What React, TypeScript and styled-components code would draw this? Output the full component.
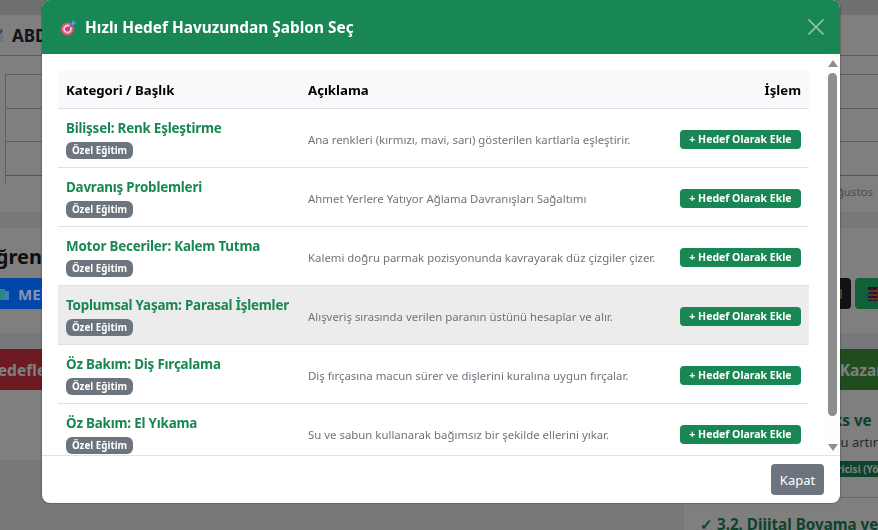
import React from 'react';
import styled, { createGlobalStyle } from 'styled-components';

const FONT = '"Noto Sans", "Open Sans", "Liberation Sans", sans-serif';

const GlobalStyle = createGlobalStyle`
  html, body {
    margin: 0;
    height: 100%;
    overflow: hidden;
    background: #eef0f3;
    font-family: ${FONT};
  }
  * { box-sizing: border-box; }
`;

const Page = styled.div`
  width: 930px;
  margin-left: -20px;
  height: 530px;
  overflow: hidden;
  display: flex;
  flex-direction: column;
  gap: 16px;
  color: #212529;
  & > * { flex: none; }
`;

const ChartCard = styled.section`
  background: #fff;
  height: 212px;
`;

const CardTop = styled.div`
  height: 15px;
  background: #dfe0e3;
`;

const Toolbar = styled.div`
  height: 40px;
  display: flex;
  align-items: center;
  gap: 8px;
  padding-left: 8px;
  font-size: 17px;
  font-weight: 700;
  color: #222838;
`;

const ChartFoot = styled.div`
  display: flex;
  justify-content: flex-end;
  padding-right: 37px;
  font-size: 11.5px;
  line-height: 18px;
  color: #999;
`;

const ActionCard = styled.section`
  background: #fff;
  height: 105px;
  padding-top: 16px;
`;

const ActionTitle = styled.h2`
  margin: 0 0 8px;
  font-size: 20px;
  line-height: 26px;
  font-weight: 700;
  color: #1c1c1c;
`;

const ActionRow = styled.div`
  display: flex;
  justify-content: space-between;
`;

const ActionGroup = styled.div`
  display: flex;
  gap: 4px;
`;

const ActionButton = styled.div<{ $bg: string; $w: number; $pad: number }>`
  width: ${(p) => p.$w}px;
  height: 31px;
  display: flex;
  align-items: center;
  gap: 8px;
  padding-left: ${(p) => p.$pad}px;
  border-radius: 4px;
  background: ${(p) => p.$bg};
  color: #fff;
  font-size: 15px;
  font-weight: 700;
  overflow: hidden;
  svg { flex: none; }
`;

/* sits above the backdrop so its saturated blue survives, stops at the modal edge */
const LitButton = styled(ActionButton)`
  position: relative;
  z-index: 2;
  border-radius: 0;
  color: #8593b5;
  svg { opacity: 0.55; }
`;

const Columns = styled.div`
  display: grid;
  grid-template-columns: 704px 1fr;
  align-items: start;
`;

const PanelLeft = styled.section`
  background: #fff;
  height: 111px;
`;

const PanelRight = styled.section`
  background: #fff;
  height: 300px;
`;

const PanelHead = styled.div<{ $bg: string; $pad: number }>`
  height: 41px;
  display: flex;
  align-items: center;
  padding-left: ${(p) => p.$pad}px;
  background: ${(p) => p.$bg};
  color: #fff;
  font-size: 15.5px;
  font-weight: 700;
  white-space: nowrap;
`;

const Goal = styled.div`
  padding: 17px 16px 20px;
  white-space: nowrap;
  & + & { border-top: 1px solid #ccc; padding-top: 13px; }
`;

const GoalTitle = styled.h3`
  margin: 0;
  font-size: 15.2px;
  line-height: 26px;
  font-weight: 700;
  color: #198754;
`;

const GoalText = styled.p`
  margin: 0 0 10px;
  font-size: 13px;
  line-height: 18px;
  color: #555;
`;

const GoalBadge = styled.span`
  display: block;
  width: fit-content;
  height: 16px;
  padding: 0 60px 0 42px;
  background: #198754;
  color: #fff;
  font-size: 10px;
  line-height: 16px;
  font-weight: 700;
`;

const Backdrop = styled.div`
  position: fixed;
  inset: 0;
  display: flex;
  align-items: flex-start;
  padding-left: 42px;
  background: rgba(0, 0, 0, 0.5);
`;

const Modal = styled.div`
  width: 798px;
  height: 503px;
  display: flex;
  flex-direction: column;
  background: #fff;
  border-radius: 8px;
  overflow: hidden;
  box-shadow: 0 0 2px rgba(0, 0, 0, 0.6);
`;

const ModalHeader = styled.header`
  flex: none;
  height: 54px;
  display: flex;
  align-items: center;
  justify-content: space-between;
  padding: 0 16px 0 19px;
  background: #198754;
`;

const ModalTitle = styled.h5`
  margin: 0;
  display: flex;
  align-items: center;
  gap: 8px;
  font-size: 15.4px;
  font-weight: 700;
  color: #fff;
`;

const CloseButton = styled.button`
  width: 16px;
  height: 16px;
  padding: 0;
  border: 0;
  background: none;
  opacity: 0.5;
  display: flex;
`;

const ModalMiddle = styled.div`
  flex: 1;
  min-height: 0;
  display: flex;
`;

const ModalBody = styled.div`
  flex: 1;
  min-width: 0;
  overflow: hidden;
  padding: 17px 16px 16px;
`;

const ScrollTrack = styled.div`
  flex: none;
  width: 15px;
  display: flex;
  flex-direction: column;
  align-items: center;
  padding: 6px 0 4px;
  background: #fdfdfd;
`;

const ScrollThumb = styled.div`
  width: 9px;
  height: 343px;
  margin: 6px 0 auto;
  border-radius: 5px;
  background: #8e8e8e;
`;

const Table = styled.table`
  width: 100%;
  border-collapse: collapse;
  table-layout: fixed;
`;

const HeadCell = styled.th<{ $w?: number; $right?: boolean }>`
  width: ${(p) => (p.$w ? `${p.$w}px` : 'auto')};
  height: 37px;
  padding: 2px 8px 0;
  background: #f8f9fa;
  border-bottom: 1px solid #dee2e6;
  text-align: ${(p) => (p.$right ? 'right' : 'left')};
  font-size: 13.2px;
  font-weight: 700;
  color: #000;
`;

const Row = styled.tr<{ $hover?: boolean }>`
  background: ${(p) => (p.$hover ? '#ececec' : 'transparent')};
`;

const Cell = styled.td`
  height: 59px;
  padding: 1px 8px 0;
  border-bottom: 1px solid #dee2e6;
  vertical-align: middle;
`;

const TitleCell = styled(Cell)`
  padding-top: 10px;
  vertical-align: top;
`;

const ActionCell = styled(Cell)`
  padding: 0 8px 1px;
  text-align: right;
`;

const ItemTitle = styled.div`
  font-size: 13.4px;
  line-height: 19px;
  font-weight: 700;
  letter-spacing: -0.2px;
  color: #198754;
  margin-bottom: 4px;
  white-space: nowrap;
`;

const Badge = styled.span`
  display: block;
  width: 67px;
  height: 17px;
  border-radius: 6px;
  background: #6c757d;
  color: #fff;
  font-size: 9.8px;
  line-height: 17px;
  font-weight: 700;
  text-align: center;
`;

const Description = styled.span`
  font-size: 11.4px;
  color: #6c757d;
  white-space: nowrap;
`;

const AddButton = styled.button`
  width: 121px;
  height: 19px;
  padding: 0;
  border: 0;
  border-radius: 4px;
  background: #198754;
  color: #fff;
  font-family: ${FONT};
  font-size: 10.5px;
  line-height: 19px;
  font-weight: 700;
`;

const ModalFooter = styled.footer`
  flex: none;
  height: 48px;
  display: flex;
  align-items: center;
  justify-content: flex-end;
  padding-right: 16px;
  border-top: 1px solid #dee2e6;
`;

const SecondaryButton = styled.button`
  width: 53px;
  height: 31px;
  padding: 0;
  border: 0;
  border-radius: 4px;
  background: #6c757d;
  color: #fff;
  font-family: ${FONT};
  font-size: 13px;
`;

const items = [
  { title: 'Bilişsel: Renk Eşleştirme', text: 'Ana renkleri (kırmızı, mavi, sarı) gösterilen kartlarla eşleştirir.' },
  { title: 'Davranış Problemleri', text: 'Ahmet Yerlere Yatıyor Ağlama Davranışları Sağaltımı' },
  { title: 'Motor Beceriler: Kalem Tutma', text: 'Kalemi doğru parmak pozisyonunda kavrayarak düz çizgiler çizer.' },
  { title: 'Toplumsal Yaşam: Parasal İşlemler', text: 'Alışveriş sırasında verilen paranın üstünü hesaplar ve alır.', hover: true },
  { title: 'Öz Bakım: Diş Fırçalama', text: 'Diş fırçasına macun sürer ve dişlerini kuralına uygun fırçalar.' },
  { title: 'Öz Bakım: El Yıkama', text: 'Su ve sabun kullanarak bağımsız bir şekilde ellerini yıkar.' },
];

const TargetIcon = () => (
  <svg width="16" height="17" viewBox="0 0 16 17">
    <circle cx="6.5" cy="10" r="6.5" fill="#e8507f" />
    <circle cx="6.5" cy="10" r="4.4" fill="#f9cbd9" />
    <circle cx="6.5" cy="10" r="2.6" fill="#dc3c6e" />
    <path d="M6.5 10 L12 4.5" stroke="#3d6fb0" strokeWidth="1.4" />
    <path d="M10.5 3.5 L12.5 0.5 L13 3 L15.5 3.5 L13 6 L10.5 5.5 Z" fill="#4aa3e8" />
  </svg>
);

const ChartIcon = () => (
  <svg width="16" height="16" viewBox="0 0 16 16">
    <rect x="1" y="1" width="14" height="14" fill="#e6e6ea" />
    <path d="M3 12L7 8L9 10L14 3" fill="none" stroke="#3a78c8" strokeWidth="1.6" />
  </svg>
);

const BooksIcon = () => (
  <svg width="16" height="16" viewBox="0 0 16 16">
    <rect x="1" y="2" width="5" height="12" fill="#e06040" />
    <rect x="6" y="3" width="5" height="11" fill="#50c060" />
    <rect x="11" y="5" width="4" height="9" fill="#80a0e0" />
  </svg>
);

const GridIcon = () => (
  <svg width="18" height="16" viewBox="0 0 18 16">
    <rect x="2" y="1" width="14" height="14" fill="#2a2a6a" />
    <path d="M2 5H16M2 9H16M2 13H16" stroke="#e0a030" strokeWidth="1.4" />
    <path d="M6 1V15M11 1V15" stroke="#d04040" strokeWidth="1.2" />
    <path d="M0 8L3 5V11Z" fill="#3090e0" />
  </svg>
);

const TagIcon = () => (
  <svg width="6" height="10" viewBox="0 0 6 10">
    <rect width="6" height="10" rx="1" fill="#c08a40" />
  </svg>
);

const ChartGrid = () => (
  <svg width="930" height="128" viewBox="0 0 930 128" style={{ display: 'block' }}>
    <g stroke="#bdbdbd" strokeWidth="1" shapeRendering="crispEdges">
      <path d="M0 0.5H930" />
      <path d="M25 19.5H930" />
      <path d="M25 53.5H930" />
      <path d="M25 86.5H930" />
      <path d="M25 120.5H930" stroke="#a8a8a8" />
      <path d="M25.5 19V128" />
    </g>
  </svg>
);

const CloseIcon = () => (
  <svg width="16" height="16" viewBox="0 0 16 16">
    <path d="M0.5 0.5L15.5 15.5M15.5 0.5L0.5 15.5" stroke="#fff" strokeWidth="1.6" />
  </svg>
);

const ArrowUp = () => (
  <svg width="10" height="7" viewBox="0 0 10 7">
    <path d="M5 0L10 7H0Z" fill="#8e8e8e" />
  </svg>
);

const ArrowDown = () => (
  <svg width="10" height="7" viewBox="0 0 10 7">
    <path d="M0 0H10L5 7Z" fill="#8e8e8e" />
  </svg>
);

export default function App() {
  return (
    <>
      <GlobalStyle />
      <Page>
        <ChartCard>
          <CardTop />
          <Toolbar>
            <ChartIcon />
            ABD
          </Toolbar>
          <ChartGrid />
          <ChartFoot>Ağustos</ChartFoot>
        </ChartCard>
        <ActionCard>
          <ActionTitle>Öğrenci</ActionTitle>
          <ActionRow>
            <LitButton $bg="#0047a8" $w={62} $pad={14}>
              <BooksIcon />
              MEB
            </LitButton>
            <ActionGroup>
              <ActionButton $bg="#212529" $w={40} $pad={25}>
                <TagIcon />
              </ActionButton>
              <ActionButton $bg="#20c070" $w={55} $pad={11}>
                <GridIcon />
              </ActionButton>
            </ActionGroup>
          </ActionRow>
        </ActionCard>
        <Columns>
          <PanelLeft>
            <PanelHead $bg="#dc3545" $pad={6}>Hedefler</PanelHead>
          </PanelLeft>
          <PanelRight>
            <PanelHead $bg="#3f9a3f" $pad={36}>Öğrenme Alanı Kazanımları</PanelHead>
            <Goal>
              <GoalTitle>✓ 3.1. Temel Grafiks ve</GoalTitle>
              <GoalText>Dikkat ve odak süresi bu artırır</GoalText>
              <GoalBadge>Dijital İçerik Geliştiricisi (Yönetici)</GoalBadge>
            </Goal>
            <Goal>
              <GoalTitle>✓ 3.2. Dijital Boyama ve</GoalTitle>
            </Goal>
          </PanelRight>
        </Columns>
      </Page>
      <Backdrop>
        <Modal>
          <ModalHeader>
            <ModalTitle>
              <TargetIcon />
              Hızlı Hedef Havuzundan Şablon Seç
            </ModalTitle>
            <CloseButton aria-label="Kapat">
              <CloseIcon />
            </CloseButton>
          </ModalHeader>
          <ModalMiddle>
            <ModalBody>
              <Table>
                <thead>
                  <tr>
                    <HeadCell $w={242}>Kategori / Başlık</HeadCell>
                    <HeadCell>Açıklama</HeadCell>
                    <HeadCell $w={140} $right>İşlem</HeadCell>
                  </tr>
                </thead>
                <tbody>
                  {items.map((item) => (
                    <Row key={item.title} $hover={item.hover}>
                      <TitleCell>
                        <ItemTitle>{item.title}</ItemTitle>
                        <Badge>Özel Eğitim</Badge>
                      </TitleCell>
                      <Cell>
                        <Description>{item.text}</Description>
                      </Cell>
                      <ActionCell>
                        <AddButton>+ Hedef Olarak Ekle</AddButton>
                      </ActionCell>
                    </Row>
                  ))}
                </tbody>
              </Table>
            </ModalBody>
            <ScrollTrack>
              <ArrowUp />
              <ScrollThumb />
              <ArrowDown />
            </ScrollTrack>
          </ModalMiddle>
          <ModalFooter>
            <SecondaryButton>Kapat</SecondaryButton>
          </ModalFooter>
        </Modal>
      </Backdrop>
    </>
  );
}
